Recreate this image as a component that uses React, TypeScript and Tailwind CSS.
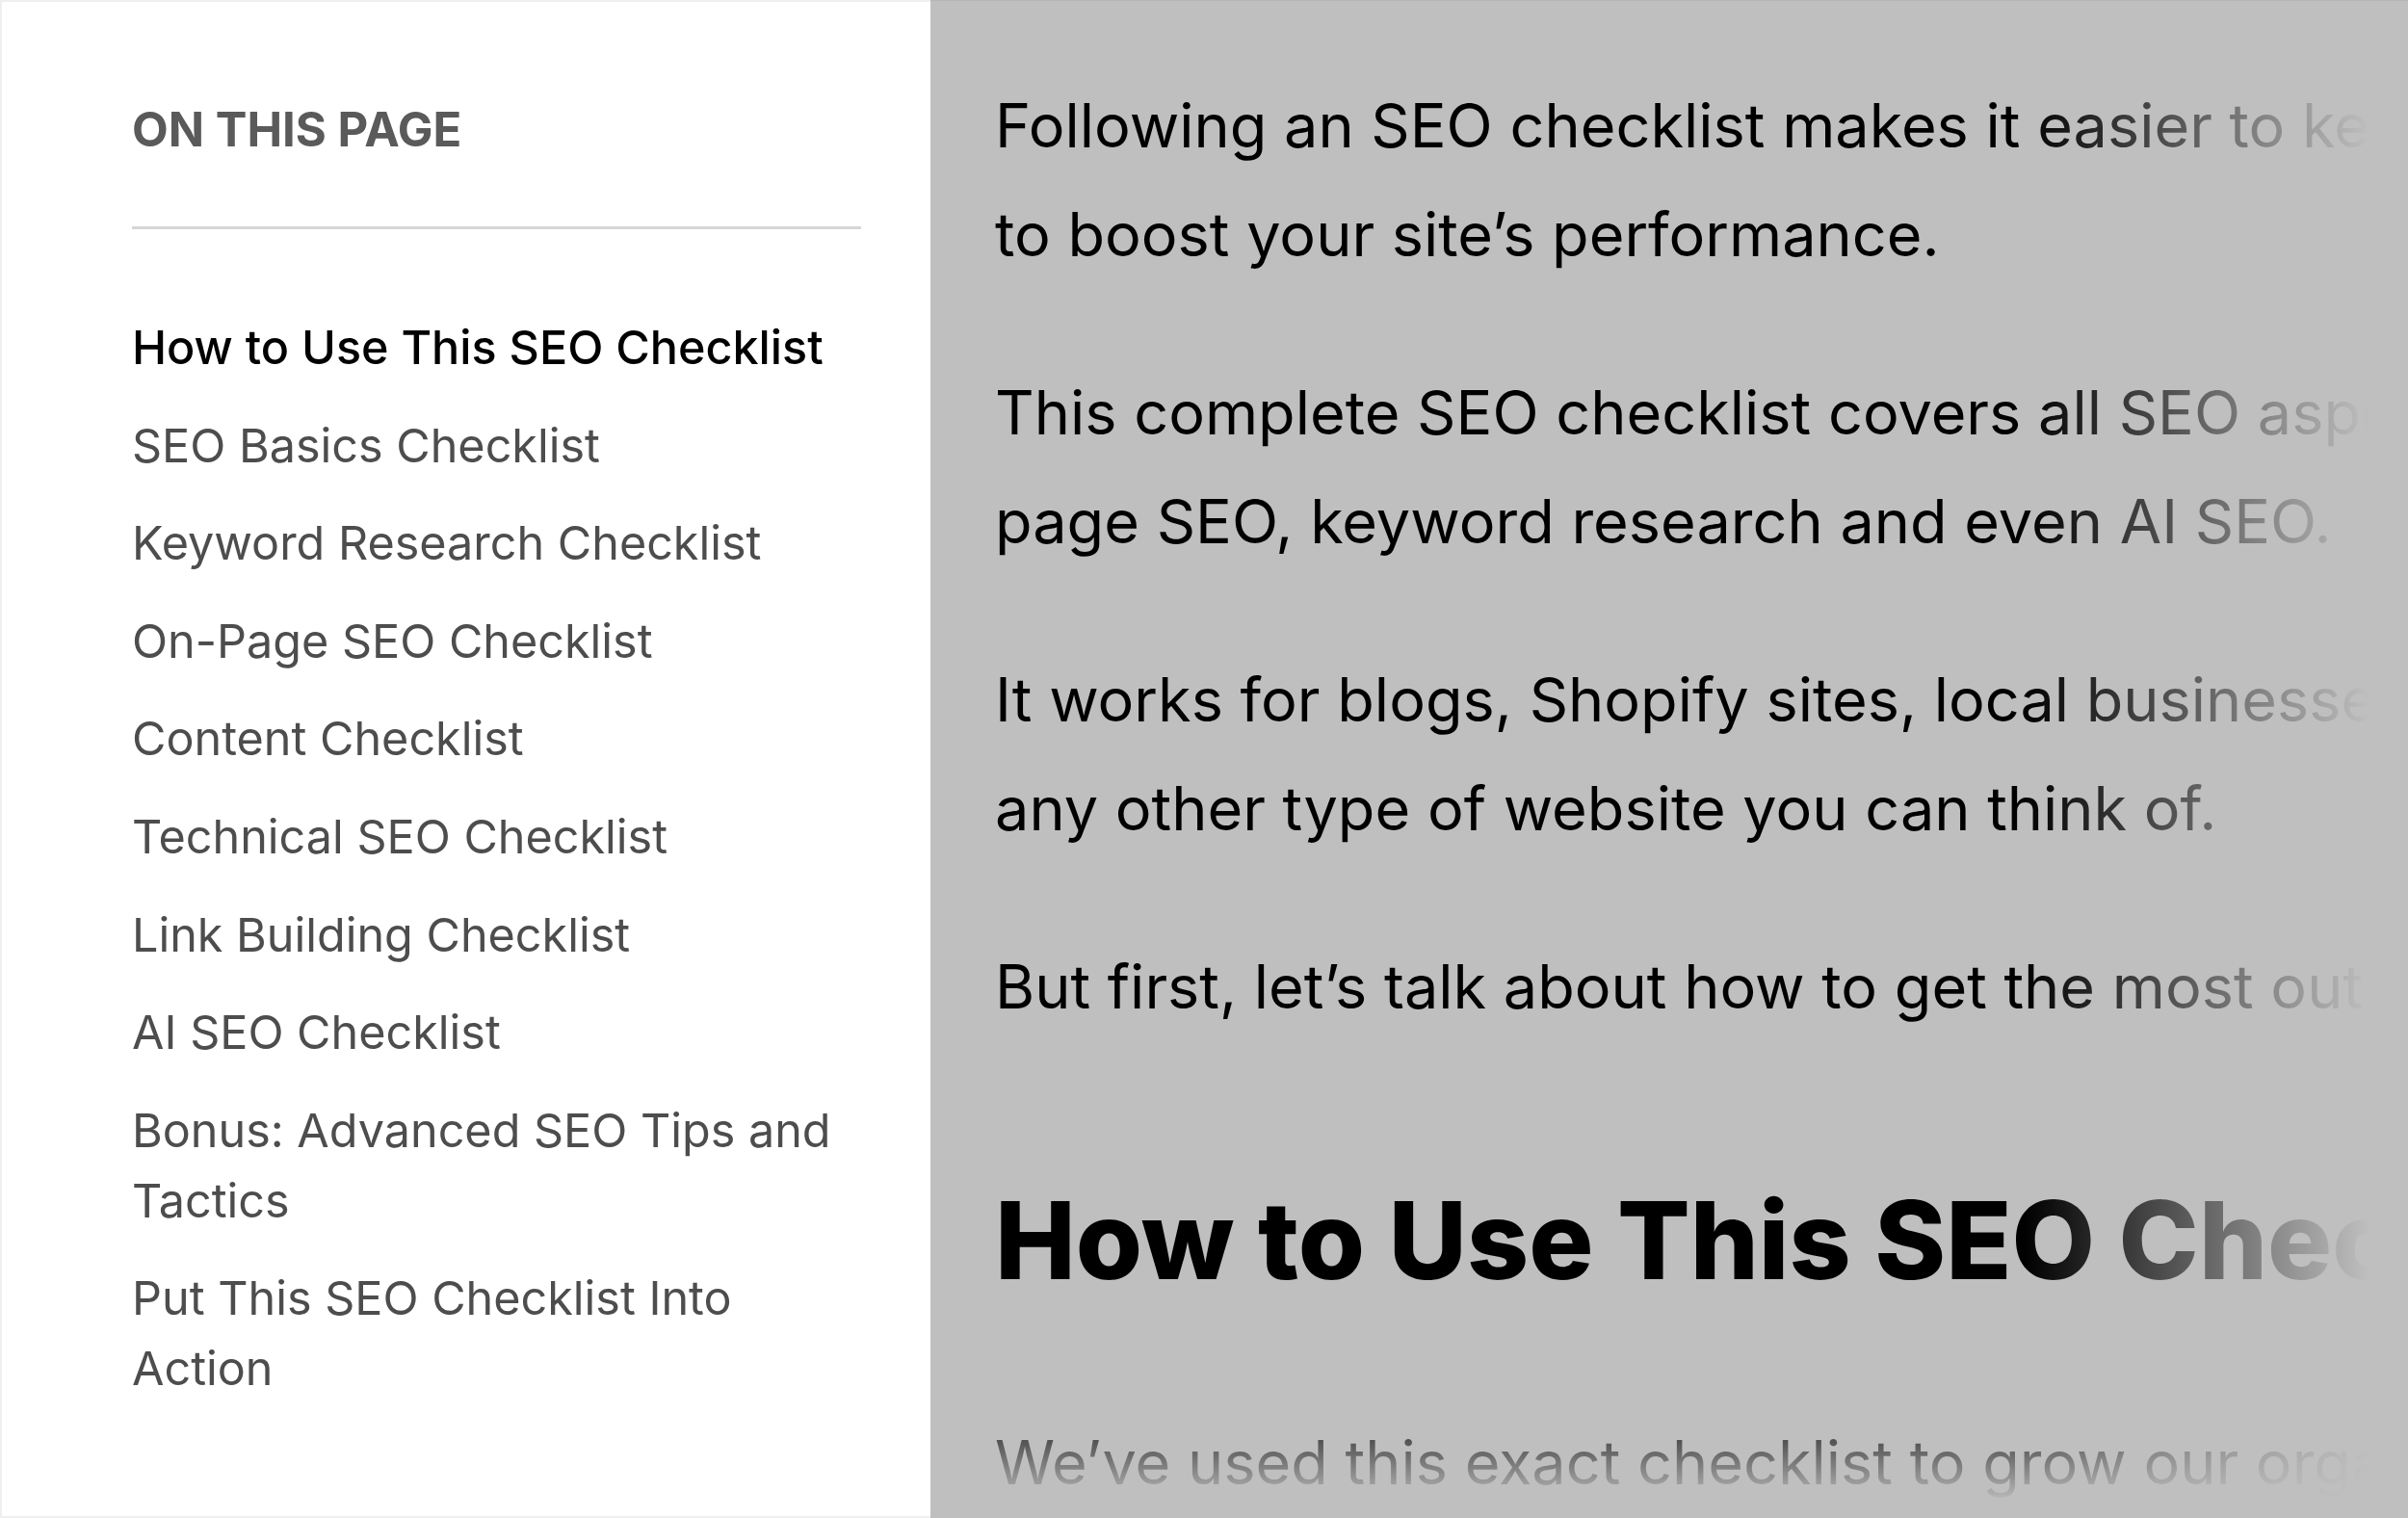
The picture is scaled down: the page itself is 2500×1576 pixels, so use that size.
import React from 'react';

const tocItems = [
  'How to Use This SEO Checklist',
  'SEO Basics Checklist',
  'Keyword Research Checklist',
  'On-Page SEO Checklist',
  'Content Checklist',
  'Technical SEO Checklist',
  'Link Building Checklist',
  'AI SEO Checklist',
  'Bonus: Advanced SEO Tips and Tactics',
  'Put This SEO Checklist Into Action',
];

// each paragraph is kept as its visual lines, the panel clips the overflow on the right
const paragraphs = [
  [
    'Following an SEO checklist makes it easier to keep track of the many tasks you need',
    'to boost your site’s performance.',
  ],
  [
    'This complete SEO checklist covers all SEO aspects, including technical SEO, on-',
    'page SEO, keyword research and even AI SEO.',
  ],
  [
    'It works for blogs, Shopify sites, local businesses, ecommerce stores, and',
    'any other type of website you can think of.',
  ],
  ['But first, let’s talk about how to get the most out of this checklist.'],
];

const App: React.FC = () => {
  return (
    <div className="flex w-[2500px] h-[1576px] overflow-hidden font-['Inter',sans-serif]">
      {/* Table of contents */}
      <aside className="w-[966px] shrink-0 bg-white border-l-2 border-t-2 border-b-2 border-[#efefef] pl-[135px] pt-[104px]">
        <div className="w-[757px]">
          <h2 className="text-[49px] leading-[58px] font-bold text-[#5a5a5a] uppercase">On this page</h2>
          <div className="mt-[71px] h-[3px] bg-[#d6d6d6]" />
          <nav className="mt-[86px] flex flex-col gap-[28.6px]">
            {tocItems.map((item, i) => (
              <a
                key={item}
                className={`text-[48.5px] leading-[73px] ${i === 0 ? 'text-black font-medium' : 'text-[#4d4d4d]'}`}
              >
                {item}
              </a>
            ))}
          </nav>
        </div>
      </aside>

      {/* Article preview, dimmed */}
      <main className="relative flex-1 overflow-hidden bg-[#bfbfbf] border-t border-[#b6b6b6]">
        <div className="pl-[67px] pt-[73px] text-black">
          {paragraphs.map((lines, i) => (
            <p key={i} className="mb-[72px] text-[63px] leading-[113px]">
              {lines.map((line) => (
                <span key={line} className="block whitespace-nowrap">
                  {line}
                </span>
              ))}
            </p>
          ))}
          <h1 className="mt-[139px] text-[112px] leading-[134px] font-extrabold whitespace-nowrap">
            How to Use This SEO Checklist
          </h1>
          <p className="mt-[108px] text-[63px] leading-[113px] whitespace-nowrap">
            We’ve used this exact checklist to grow our organic traffic month after month.
          </p>
        </div>

        {/* fades */}
        <div className="absolute top-0 bottom-0 right-0 w-[400px] bg-linear-to-r from-[#bfbfbf]/0 to-[#bfbfbf] to-90%" />
        <div className="absolute left-0 right-0 bottom-0 h-[130px] bg-linear-to-b from-[#bfbfbf]/0 to-[#bfbfbf] to-88%" />
      </main>
    </div>
  );
};

export default App;
